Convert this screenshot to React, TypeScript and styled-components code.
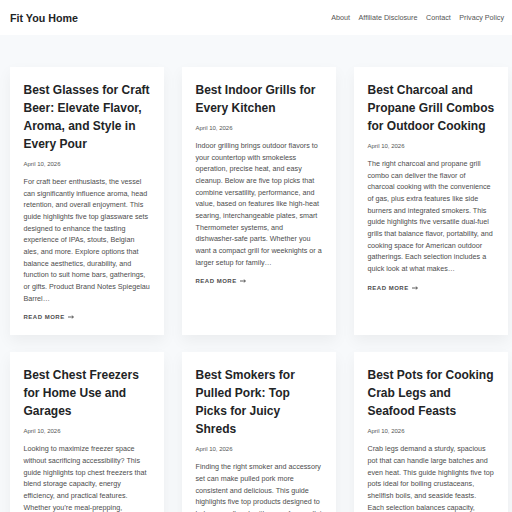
import React from 'react';
import styled, { createGlobalStyle } from 'styled-components';

const GlobalStyle = createGlobalStyle`
  html, body {
    margin: 0;
    padding: 0;
    background: #f7f9fb;
    font-family: "Liberation Sans", Arial, sans-serif;
  }
`;

const Header = styled.header`
  height: 35px;
  background: #ffffff;
  display: flex;
  align-items: center;
  justify-content: space-between;
  padding: 0 8px 0 10px;
`;

const Brand = styled.a`
  font-size: 10.7px;
  font-weight: 700;
  color: #222426;
  text-decoration: none;
`;

const Nav = styled.nav`
  display: flex;
  gap: 8.5px;
  align-items: center;
`;

const NavLink = styled.a`
  font-size: 7.2px;
  color: #555555;
  text-decoration: none;
`;

const Grid = styled.main`
  display: grid;
  grid-template-columns: repeat(3, 154px);
  column-gap: 18px;
  row-gap: 17px;
  padding: 32px 0 0 10px;
`;

const Card = styled.article`
  background: #ffffff;
  padding: 14px 13.5px 13px;
  box-shadow: 0 6px 14px rgba(0, 0, 0, 0.05);
  display: flex;
  flex-direction: column;
  align-items: flex-start;
`;

const Title = styled.h2`
  margin: 0;
  font-size: 12px;
  line-height: 18px;
  font-weight: 700;
  color: #222426;
`;

const DateLine = styled.div`
  margin-top: 6px;
  font-size: 6px;
  line-height: 10px;
  color: #555555;
`;

const Excerpt = styled.p`
  margin: 7px 0 0;
  font-size: 7.2px;
  line-height: 11.65px;
  color: #4d4d4d;
`;

const ReadMore = styled.a`
  margin-top: 8px;
  display: flex;
  align-items: center;
  gap: 3px;
  font-size: 6px;
  line-height: 10px;
  font-weight: 700;
  letter-spacing: 0.5px;
  text-transform: uppercase;
  color: #4d4d4d;
  text-decoration: none;
`;

const Arrow = () => (
  <svg width="6" height="4" viewBox="0 0 6 4" fill="none" stroke="#4d4d4d" strokeWidth="0.9">
    <path d="M0 2h5.4M3.8 0.6L5.4 2 3.8 3.4" />
  </svg>
);

type Post = { title: string; excerpt: string };

const posts: Post[] = [
  {
    title: 'Best Glasses for Craft Beer: Elevate Flavor, Aroma, and Style in Every Pour',
    excerpt:
      'For craft beer enthusiasts, the vessel can significantly influence aroma, head retention, and overall enjoyment. This guide highlights five top glassware sets designed to enhance the tasting experience of IPAs, stouts, Belgian ales, and more. Explore options that balance aesthetics, durability, and function to suit home bars, gatherings, or gifts. Product Brand Notes Spiegelau Barrel…',
  },
  {
    title: 'Best Indoor Grills for Every Kitchen',
    excerpt:
      'Indoor grilling brings outdoor flavors to your countertop with smokeless operation, precise heat, and easy cleanup. Below are five top picks that combine versatility, performance, and value, based on features like high-heat searing, interchangeable plates, smart Thermometer systems, and dishwasher-safe parts. Whether you want a compact grill for weeknights or a larger setup for family…',
  },
  {
    title: 'Best Charcoal and Propane Grill Combos for Outdoor Cooking',
    excerpt:
      'The right charcoal and propane grill combo can deliver the flavor of charcoal cooking with the convenience of gas, plus extra features like side burners and integrated smokers. This guide highlights five versatile dual-fuel grills that balance flavor, portability, and cooking space for American outdoor gatherings. Each selection includes a quick look at what makes…',
  },
  {
    title: 'Best Chest Freezers for Home Use and Garages',
    excerpt:
      'Looking to maximize freezer space without sacrificing accessibility? This guide highlights top chest freezers that blend storage capacity, energy efficiency, and practical features. Whether you’re meal-prepping, stocking a garage, or buying in bulk, these picks offer dependable performance…',
  },
  {
    title: 'Best Smokers for Pulled Pork: Top Picks for Juicy Shreds',
    excerpt:
      'Finding the right smoker and accessory set can make pulled pork more consistent and delicious. This guide highlights five top products designed to help you pull pork with ease, from pellet smokers to meat claws…',
  },
  {
    title: 'Best Pots for Cooking Crab Legs and Seafood Feasts',
    excerpt:
      'Crab legs demand a sturdy, spacious pot that can handle large batches and even heat. This guide highlights five top pots ideal for boiling crustaceans, shellfish boils, and seaside feasts. Each selection balances capacity, durability, and ease of cleaning…',
  },
];

const App: React.FC = () => (
  <>
    <GlobalStyle />
    <Header>
      <Brand href="#">Fit You Home</Brand>
      <Nav>
        <NavLink href="#">About</NavLink>
        <NavLink href="#">Affiliate Disclosure</NavLink>
        <NavLink href="#">Contact</NavLink>
        <NavLink href="#">Privacy Policy</NavLink>
      </Nav>
    </Header>
    <Grid>
      {posts.map((p) => (
        <Card key={p.title}>
          <Title>{p.title}</Title>
          <DateLine>April 10, 2026</DateLine>
          <Excerpt>{p.excerpt}</Excerpt>
          <ReadMore href="#">
            Read More
            <Arrow />
          </ReadMore>
        </Card>
      ))}
    </Grid>
  </>
);

export default App;
